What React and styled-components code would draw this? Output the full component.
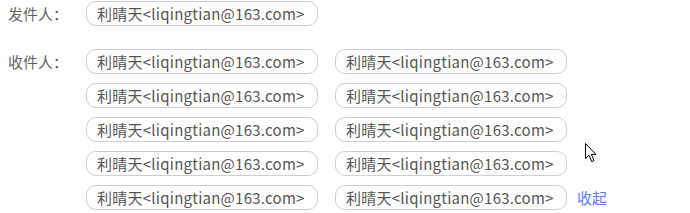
import styled, { createGlobalStyle } from "styled-components";

const GlobalStyle = createGlobalStyle`
  html, body {
    margin: 0;
    padding: 0;
    background: #fff;
  }
  body {
    font-family: "Noto Sans CJK SC", "Noto Sans", sans-serif;
  }
`;

const sender = "利晴天<liqingtian@163.com>";
const receivers = Array.from({ length: 10 }, () => "利晴天<liqingtian@163.com>");

export default function App() {
  return (
    <>
      <GlobalStyle />
      <Panel>
        <Field>
          <Label>发件人：</Label>
          <ChipList>
            <Chip>{sender}</Chip>
          </ChipList>
        </Field>
        <Field>
          <Label>收件人：</Label>
          <ChipList>
            {receivers.map((r, i) => (
              <Chip key={i}>{r}</Chip>
            ))}
            <Toggle>收起</Toggle>
          </ChipList>
        </Field>
        <Cursor viewBox="0 0 12 20" width="12" height="20">
          <path
            d="M0.5 0.5 L0.5 15.5 L4 12.2 L6.6 18.6 L9 17.6 L6.4 11.4 L11 11.4 Z"
            fill="#fff"
            stroke="#000"
            strokeWidth="1"
            strokeLinejoin="round"
          />
        </Cursor>
      </Panel>
    </>
  );
}

const Panel = styled.div`
  position: relative;
  width: 690px;
  height: 213px;
  padding-top: 1px;
  box-sizing: border-box;
  display: flex;
  flex-direction: column;
  gap: 23px;
`;

const Field = styled.div`
  display: flex;
  align-items: flex-start;
`;

const Label = styled.div`
  width: 78px;
  padding-left: 8px;
  flex-shrink: 0;
  line-height: 25px;
  font-size: 15px;
  color: #666;
`;

const ChipList = styled.div`
  width: 540px;
  display: flex;
  flex-wrap: wrap;
  align-items: center;
  column-gap: 17px;
  row-gap: 9px;
`;

const Chip = styled.span`
  box-sizing: border-box;
  width: 232px;
  height: 25px;
  padding: 0 10px;
  border: 1px solid #cfcfcf;
  border-radius: 10px;
  display: flex;
  align-items: center;
  font-size: 15px;
  letter-spacing: 0.25px;
  color: #555;
  white-space: nowrap;
  overflow: hidden;
`;

const Toggle = styled.a`
  margin-left: -7px;
  font-size: 15px;
  line-height: 25px;
  color: #5b7cf6;
  cursor: pointer;
`;

const Cursor = styled.svg`
  position: absolute;
  left: 585px;
  top: 143px;
`;
